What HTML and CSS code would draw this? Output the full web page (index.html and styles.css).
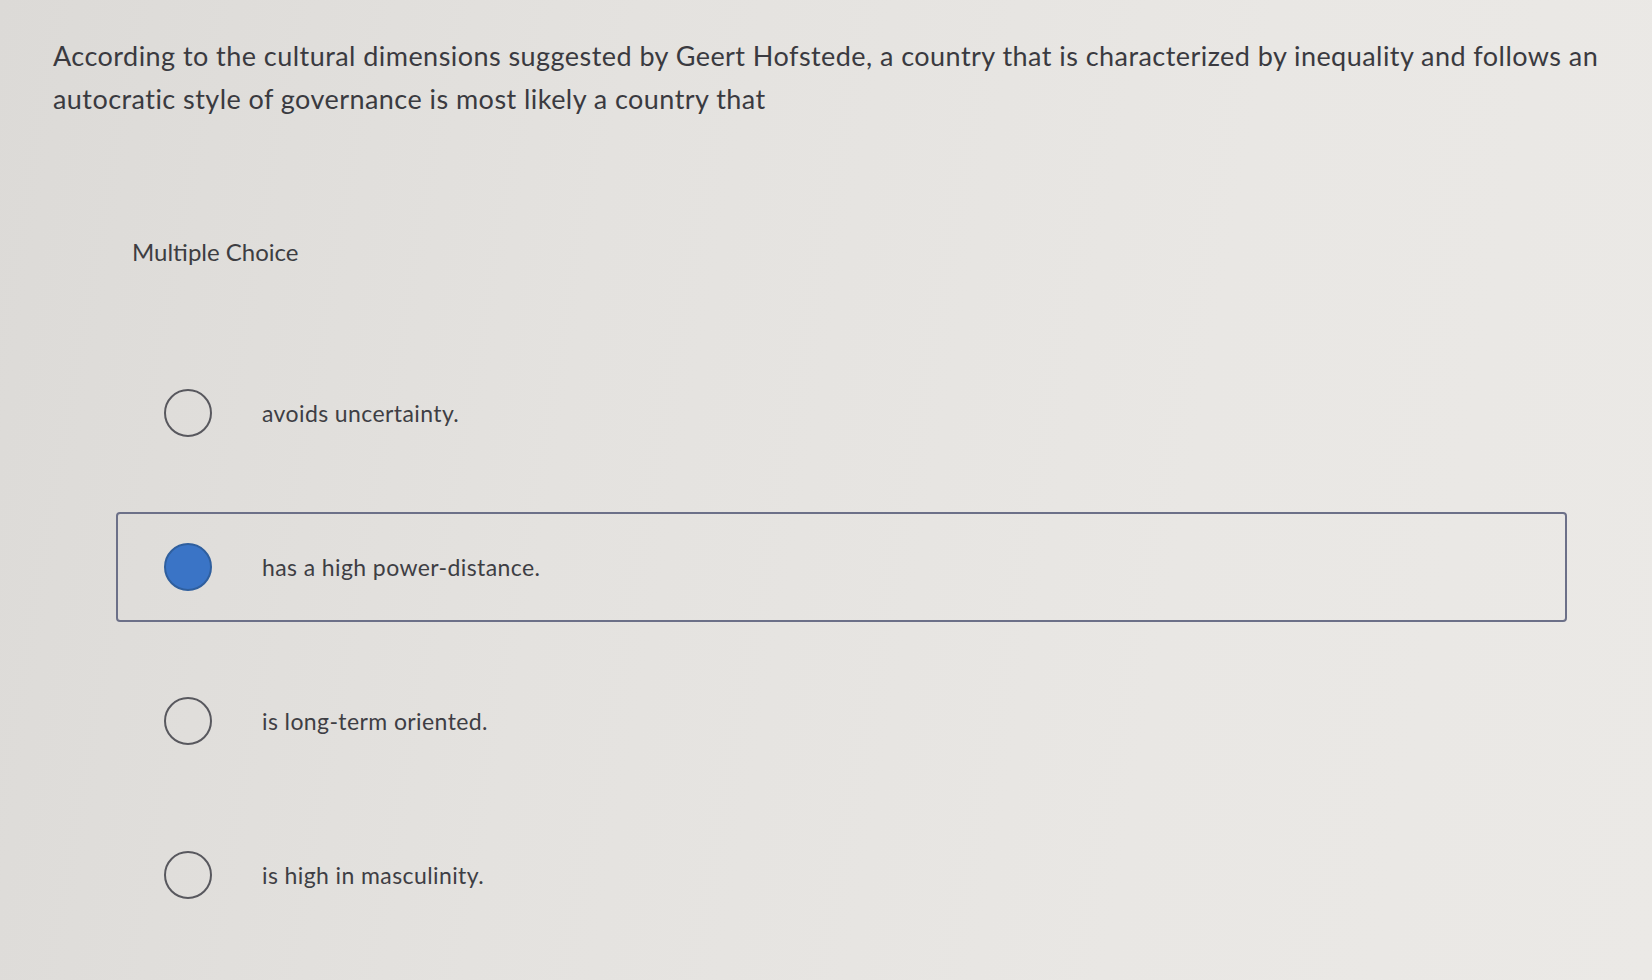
FILE: index.html
```html
<!DOCTYPE html>
<html lang="en">
<head>
<meta charset="utf-8">
<title>Multiple Choice</title>
<link rel="stylesheet" href="styles.css">
</head>
<body>
<main class="page">
  <p class="question">According to the cultural dimensions suggested by Geert Hofstede, a country that is characterized by inequality and follows an<br>autocratic style of governance is most likely a country that</p>
  <div class="mc-label">Multiple Choice</div>
  <ul class="options">
    <li class="option"><span class="radio"></span><span class="option-text">avoids uncertainty.</span></li>
    <li class="option selected"><span class="radio"></span><span class="option-text">has a high power-distance.</span></li>
    <li class="option"><span class="radio"></span><span class="option-text">is long-term oriented.</span></li>
    <li class="option"><span class="radio"></span><span class="option-text">is high in masculinity.</span></li>
  </ul>
</main>
</body>
</html>
```
FILE: styles.css
```css
html, body {
  margin: 0;
  padding: 0;
  height: 100%;
}
body {
  background: linear-gradient(100deg, #dcdad7 0%, #e4e2df 35%, #e9e7e4 70%, #ebe9e6 100%);
  color: #3b3b40;
  font-family: Lato, "Open Sans", "Liberation Sans", sans-serif;
  overflow: hidden;
}
.page {
  padding: 34px 0 0 53px;
  width: 1599px;
  box-sizing: border-box;
}
.question {
  margin: 0;
  font-size: 27px;
  line-height: 43px;
  letter-spacing: 0.45px;
  white-space: nowrap;
  color: #3a3a40;
}
.mc-label {
  margin: 119px 0 0 79px;
  font-size: 24px;
  line-height: 26px;
  color: #3d3d42;
}
.options {
  list-style: none;
  margin: 93px 32px 0 63px;
  padding: 0;
  display: flex;
  flex-direction: column;
  gap: 44px;
}
.option {
  height: 110px;
  box-sizing: border-box;
  display: flex;
  align-items: center;
  padding-left: 46px;
  border: 2px solid transparent;
  border-radius: 4px;
}
.option.selected {
  border-color: #6c7088;
}
.radio {
  width: 44px;
  height: 44px;
  border: 2px solid #58585e;
  border-radius: 50%;
  flex: none;
}
.selected .radio {
  background: #3a74c6;
  border-color: #2f5f9e;
}
.option-text {
  margin-left: 50px;
  font-size: 23px;
  color: #3e3e44;
  letter-spacing: 0.4px;
}
```
